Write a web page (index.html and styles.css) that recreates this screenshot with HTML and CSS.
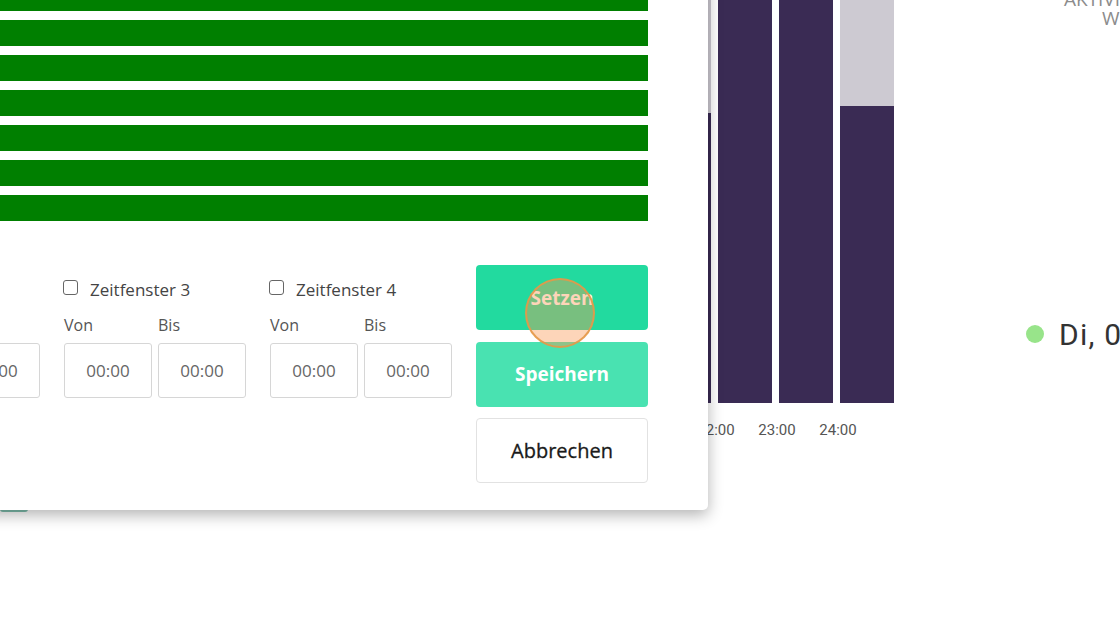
FILE: index.html
```html
<!DOCTYPE html>
<html lang="de">
<head>
<meta charset="utf-8">
<title>Zeitfenster</title>
<link rel="stylesheet" href="styles.css">
</head>
<body>
<div class="page">
  <div class="left-col">
    <div class="behind-btn"></div>
  </div>
  <div class="chart">
    <div class="bars">
      <div class="bar"><div class="fill" style="height:300px"></div></div>
      <div class="bar"><div class="fill" style="height:290px"></div></div>
      <div class="bar"><div class="fill" style="height:403px"></div></div>
      <div class="bar"><div class="fill" style="height:403px"></div></div>
      <div class="bar"><div class="fill" style="height:297px"></div></div>
    </div>
    <div class="axis">
      <span>20:00</span>
      <span>21:00</span>
      <span>22:00</span>
      <span>23:00</span>
      <span>24:00</span>
    </div>
  </div>
  <div class="side">
    <div class="side-title">
      <div class="t1">AKTIVITÄT</div>
      <div class="t2">WOCHE</div>
    </div>
    <div class="legend"><span class="dot"></span><span class="legend-text">Di, 06.02.</span></div>
  </div>
</div>

<div class="modal">
  <div class="schedule">
    <div class="slot"></div>
    <div class="slot"></div>
    <div class="slot"></div>
    <div class="slot"></div>
    <div class="slot"></div>
    <div class="slot"></div>
    <div class="slot"></div>
  </div>
  <div class="form-row">
    <div class="group">
      <div class="cb-row"><span class="cb"></span><span>Zeitfenster 1</span></div>
      <div class="lbl-row"><span>Von</span><span>Bis</span></div>
      <div class="in-row"><div class="time">00:00</div><div class="time">00:00</div></div>
    </div>
    <div class="group">
      <div class="cb-row"><span class="cb"></span><span>Zeitfenster 2</span></div>
      <div class="lbl-row"><span>Von</span><span>Bis</span></div>
      <div class="in-row"><div class="time">00:00</div><div class="time">00:00</div></div>
    </div>
    <div class="group">
      <div class="cb-row"><span class="cb"></span><span>Zeitfenster 3</span></div>
      <div class="lbl-row"><span>Von</span><span>Bis</span></div>
      <div class="in-row"><div class="time">00:00</div><div class="time">00:00</div></div>
    </div>
    <div class="group">
      <div class="cb-row"><span class="cb"></span><span>Zeitfenster 4</span></div>
      <div class="lbl-row"><span>Von</span><span>Bis</span></div>
      <div class="in-row"><div class="time">00:00</div><div class="time">00:00</div></div>
    </div>
    <div class="actions">
      <button class="btn btn-set">Setzen</button>
      <button class="btn btn-save">Speichern</button>
      <button class="btn btn-cancel">Abbrechen</button>
    </div>
  </div>
</div>

<div class="click-marker"></div>
</body>
</html>
```

FILE: styles.css
```css
html, body {
  margin: 0;
  padding: 0;
}
body {
  width: 1120px;
  height: 626px;
  overflow: hidden;
  position: relative;
  background: #ffffff;
  font-family: "Open Sans", "Noto Sans", sans-serif;
}

.page {
  display: flex;
  height: 626px;
}
.left-col {
  width: 596px;
  flex-shrink: 0;
}
.behind-btn {
  margin-top: 498px;
  width: 28px;
  height: 14px;
  background: #7fbfae;
  border-radius: 3px;
}

.chart {
  width: 298px;
  flex-shrink: 0;
}
.bars {
  display: flex;
  gap: 7px;
  height: 403px;
}
.bar {
  width: 54px;
  background: #cdcad2;
  display: flex;
  flex-direction: column;
  justify-content: flex-end;
}
.fill {
  background: #3a2b54;
}
.axis {
  display: flex;
  gap: 7px;
  margin-left: -29px;
  margin-top: 16px;
}
.axis span {
  width: 54px;
  flex-shrink: 0;
  text-align: center;
  font-family: Roboto, "Liberation Sans", sans-serif;
  font-size: 15px;
  line-height: 22px;
  color: #555555;
}

.side {
  margin-left: 132px;
  flex: 1;
  min-width: 0;
  white-space: nowrap;
}
.side-title {
  margin-top: -10px;
  font-size: 19px;
  line-height: 19px;
  color: #8c8c8c;
}
.t1 { padding-left: 38px; }
.t2 { padding-left: 76px; }
.legend {
  margin-top: 288px;
  display: flex;
  align-items: center;
  height: 36px;
}
.dot {
  width: 18px;
  height: 18px;
  border-radius: 50%;
  background: #98e48a;
  flex-shrink: 0;
  margin-right: 15px;
}
.legend-text {
  font-family: Roboto, "Liberation Sans", sans-serif;
  font-size: 30px;
  letter-spacing: 1.2px;
  color: #333333;
}

.modal {
  position: absolute;
  left: -372px;
  top: -40px;
  width: 1080px;
  box-sizing: border-box;
  padding: 25px 60px 27px 0;
  background: #ffffff;
  border-radius: 5px;
  box-shadow: 0 5px 15px rgba(0, 0, 0, 0.3);
}
.schedule {
  display: flex;
  flex-direction: column;
  gap: 9px;
}
.slot {
  height: 26px;
  background: #007f00;
}
.form-row {
  margin-top: 44px;
  display: flex;
  justify-content: flex-end;
  align-items: flex-start;
  gap: 24px;
}
.group {
  width: 182px;
  flex-shrink: 0;
  margin-top: 12px;
}
.cb-row {
  display: flex;
  align-items: center;
  height: 24px;
  font-size: 17px;
  color: #444444;
}
.cb {
  width: 13px;
  height: 13px;
  border: 1px solid #666666;
  border-radius: 3px;
  margin-right: 12px;
  margin-bottom: 4px;
  margin-left: -1px;
  flex-shrink: 0;
}
.lbl-row {
  margin-top: 12px;
  display: flex;
  gap: 6px;
  height: 24px;
  line-height: 24px;
  font-size: 16px;
  color: #555555;
}
.lbl-row span {
  width: 88px;
}
.in-row {
  margin-top: 6px;
  display: flex;
  gap: 6px;
}
.time {
  width: 88px;
  height: 55px;
  box-sizing: border-box;
  border: 1px solid #d6d6d6;
  border-radius: 3px;
  display: flex;
  align-items: center;
  justify-content: center;
  font-size: 17px;
  color: #666666;
}
.actions {
  width: 172px;
  flex-shrink: 0;
  display: flex;
  flex-direction: column;
  gap: 11.5px;
}
.btn {
  height: 65px;
  border-radius: 4px;
  border: 1px solid transparent;
  font-family: "Open Sans", "Noto Sans", sans-serif;
  font-size: 19px;
  padding: 0;
  cursor: pointer;
}
.btn-set {
  background: #22da9f;
  color: #ffffff;
  font-weight: 700;
}
.btn-save {
  background: #49e2b1;
  color: #ffffff;
  font-weight: 700;
}
.btn-cancel {
  background: #ffffff;
  border-color: #e2e2e2;
  color: #1a1a1a;
  font-size: 20px;
  font-weight: 400;
  -webkit-text-stroke: 0.3px #1a1a1a;
}

.click-marker {
  position: absolute;
  left: 525px;
  top: 278px;
  width: 70px;
  height: 70px;
  box-sizing: border-box;
  border-radius: 50%;
  border: 2.5px solid rgba(228, 152, 72, 0.9);
  background: rgba(250, 150, 80, 0.4);
}
```
